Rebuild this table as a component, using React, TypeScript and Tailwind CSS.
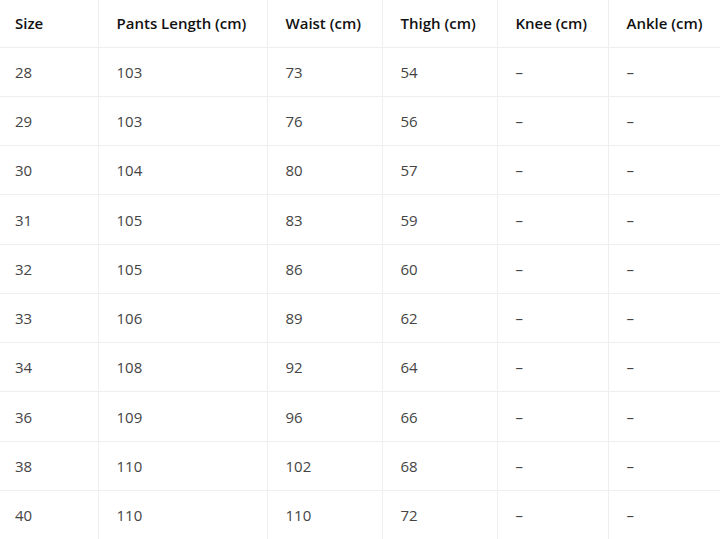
const headers = ["Size", "Pants Length (cm)", "Waist (cm)", "Thigh (cm)", "Knee (cm)", "Ankle (cm)"];

const rows = [
  ["28", "103", "73", "54"],
  ["29", "103", "76", "56"],
  ["30", "104", "80", "57"],
  ["31", "105", "83", "59"],
  ["32", "105", "86", "60"],
  ["33", "106", "89", "62"],
  ["34", "108", "92", "64"],
  ["36", "109", "96", "66"],
  ["38", "110", "102", "68"],
  ["40", "110", "110", "72"],
];

const widths = ["w-[98px]", "w-[169px]", "w-[115px]", "w-[115px]", "w-[111px]", "w-[112px]"];

export default function App() {
  return (
    <div className="w-[720px] h-[539px] overflow-hidden bg-white font-['Open_Sans',sans-serif] text-[15px]">
      <table className="w-[720px] table-fixed border-collapse">
        <colgroup>
          {widths.map((w, i) => (
            <col key={i} className={w} />
          ))}
        </colgroup>
        <thead>
          <tr className="h-[47px]">
            {headers.map((h, i) => (
              <th
                key={h}
                className={
                  "border-b border-[#eeeeee] pr-2 text-left font-semibold text-[#111111] whitespace-nowrap " +
                  (i === 0 ? "pl-[15px] " : "pl-[18px] ") +
                  (i < headers.length - 1 ? "border-r" : "")
                }
              >
                {h}
              </th>
            ))}
          </tr>
        </thead>
        <tbody>
          {rows.map((r) => (
            <tr key={r[0]} className="h-[49.25px]">
              {[...r, "–", "–"].map((c, i) => (
                <td
                  key={i}
                  className={
                    "border-b border-[#eeeeee] pr-2 pt-[1px] text-left text-[#444444] " +
                    (i === 0 ? "pl-[15px] " : "pl-[18px] ") +
                    (i < 5 ? "border-r" : "")
                  }
                >
                  {c}
                </td>
              ))}
            </tr>
          ))}
        </tbody>
      </table>
    </div>
  );
}
